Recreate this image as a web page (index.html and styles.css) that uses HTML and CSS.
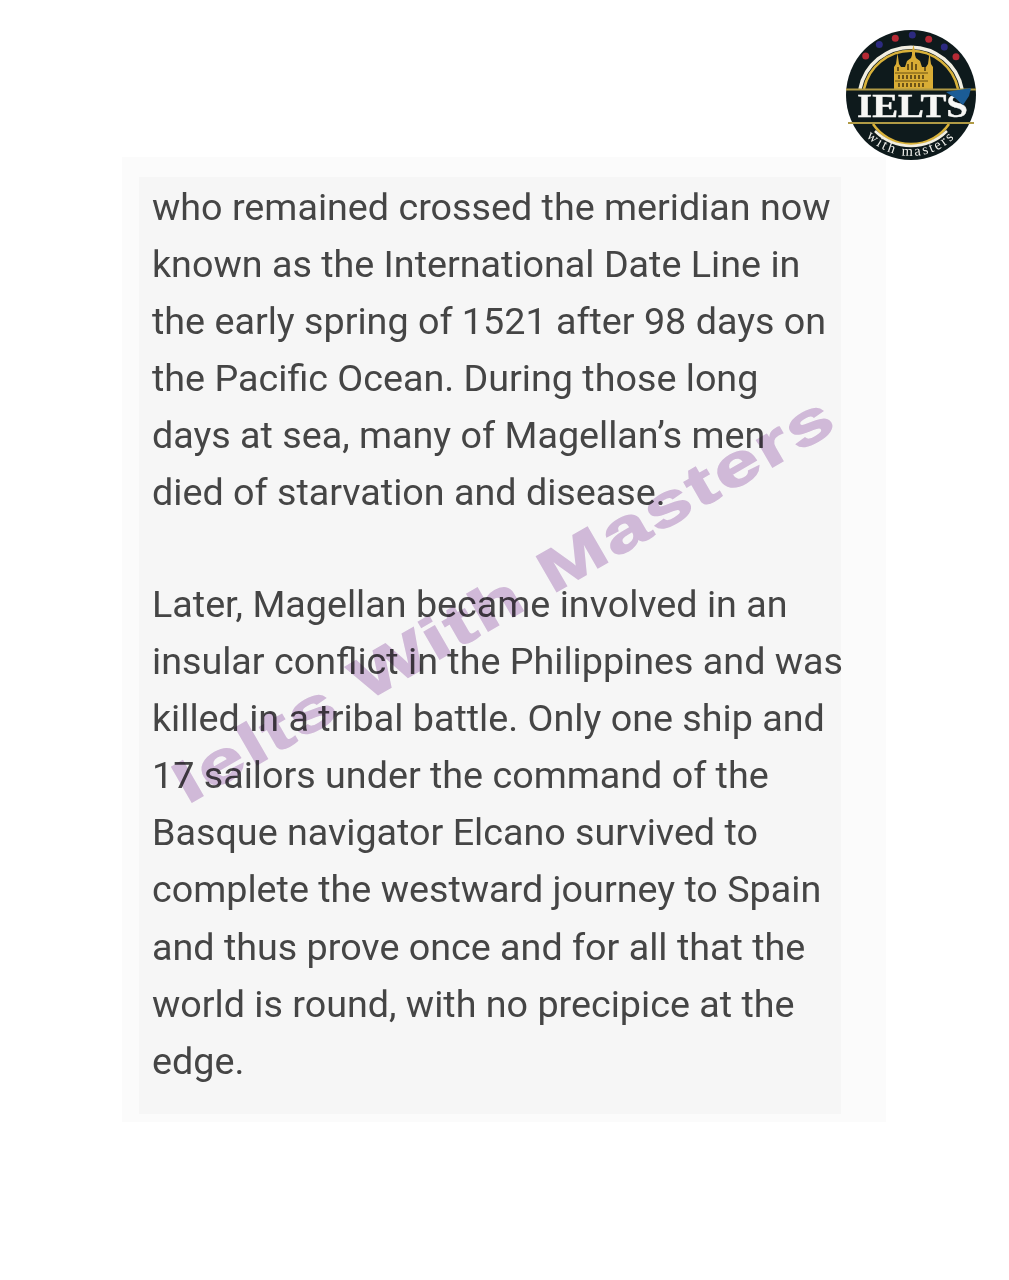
FILE: index.html
```html
<!DOCTYPE html>
<html lang="en">
<head>
<meta charset="utf-8">
<title>IELTS with masters</title>
<link rel="stylesheet" href="styles.css">
</head>
<body>
<div class="page">
  <header class="top">
    <svg class="logo" viewBox="0 0 132 132" width="132" height="132" role="img" aria-label="IELTS with masters">
      <defs>
        <path id="arc" d="M8 84.900 A61 61 0 0 0 124 84.900"/>
      </defs>
      <circle cx="66" cy="66" r="65" fill="#0e1a1c"/>
      <circle cx="20.7" cy="27" r="3.5" fill="#b52a35"/>
      <circle cx="34.3" cy="15.5" r="3.5" fill="#2c2a80"/>
      <circle cx="50.3" cy="9.3" r="3.5" fill="#b52a35"/>
      <circle cx="67.3" cy="6" r="3.5" fill="#2c2a80"/>
      <circle cx="83.7" cy="10.3" r="3.5" fill="#b52a35"/>
      <circle cx="99.3" cy="18" r="3.5" fill="#2c2a80"/>
      <circle cx="111" cy="27.7" r="3.5" fill="#b52a35"/>
      <path d="M15 60 A52 52 0 0 1 117 60" fill="none" stroke="#f2efe2" stroke-width="3.5"/>
      <path d="M19 60 A48 48 0 0 1 113 60" fill="none" stroke="#d9b23a" stroke-width="2.5"/>
      <path d="M28 95 A46 46 0 0 0 104 95" fill="none" stroke="#d9b23a" stroke-width="2.5"/>
      <path d="M30 102 A51 51 0 0 0 102 102" fill="none" stroke="#f2efe2" stroke-width="2.5"/>
      <path d="M49 60V38l2-3 1.500-11 1.500 11 2 3h4l2-6 4-3 1-3V22l1.500-6 1.500 6v4l1 3 4 3 2 6h4l2-3 1.500-11 1.500 11 2 3v22z" fill="#d9ad35"/>
      <path d="M50 44h33M50 52h33" stroke="#6d5212" stroke-width="1" fill="none"/>
      <path d="M54 46v4M58 46v4M62 46v4M66 46v4M70 46v4M74 46v4M78 46v4M54 54v4M58 54v4M62 54v4M66 54v4M70 54v4M74 54v4M78 54v4M53 38v4M80 38v4M63 35v6M67 33v8M71 35v6" stroke="#33260a" stroke-width="1.300" fill="none"/>
      <path d="M1 60.500H131M3 94H129" stroke="#b09a45" stroke-width="2"/>
      <text class="logo-word" x="67.500" y="88" text-anchor="middle" textLength="111" lengthAdjust="spacingAndGlyphs">IELTS</text>
      <path d="M101 63l25-4-2 8-6 9-8-7z" fill="#1b5c96"/>
      <text class="logo-sub"><textPath href="#arc" startOffset="50%" text-anchor="middle">with masters</textPath></text>
    </svg>
  </header>
  <main class="panel">
    <div class="sheet">
      <p class="para">who remained crossed the meridian now<br>known as the International Date Line in<br>the early spring of 1521 after 98 days on<br>the Pacific Ocean. During those long<br>days at sea, many of Magellan’s men<br>died of starvation and disease.</p>
      <p class="para">Later, Magellan became involved in an<br>insular conflict in the Philippines and was<br>killed in a tribal battle. Only one ship and<br>17 sailors under the command of the<br>Basque navigator Elcano survived to<br>complete the westward journey to Spain<br>and thus prove once and for all that the<br>world is round, with no precipice at the<br>edge.</p>
    </div>
  </main>
  <div class="mark">Ielts With Masters</div>
</div>
</body>
</html>
```
FILE: styles.css
```css
* { box-sizing: border-box; }
html, body { margin: 0; background: #fff; }
.page { position: relative; width: 1009px; height: 1280px; overflow: hidden; }
.top { height: 157px; padding: 29px 32px 0 0; display: flex; justify-content: flex-end; align-items: flex-start; }
.logo { display: block; flex: none; position: relative; z-index: 1; }
.logo-word { font-family: "Liberation Serif", serif; font-weight: 700; font-size: 34px; fill: #f7f7f5; stroke: #f7f7f5; stroke-width: 0.4px; }
.logo-sub { font-family: "Liberation Serif", serif; font-size: 14.500px; letter-spacing: 2.200px; fill: #eeeeea; }
.panel { width: 764px; height: 965px; margin-left: 122px; padding: 20px 45px 8px 17px; background: #fbfbfb; }
.sheet { height: 937px; padding: 2px 0 0 13px; background: #f6f6f6; }
.para { margin: 0 0 54.400px; font-family: Roboto, sans-serif; font-size: 37.700px; line-height: 57.100px; color: #454545; white-space: nowrap; filter: blur(0.3px); }
.mark { position: absolute; left: 134px; top: 568px; width: 740px; text-align: center; font-family: "Liberation Sans", sans-serif; font-weight: 700; font-size: 62px; line-height: 62px; letter-spacing: 2px; white-space: nowrap; color: #d8c0e0; -webkit-text-stroke: 1.500px #d8c0e0; mix-blend-mode: multiply; transform: rotate(-30deg) scaleX(1.34) scaleY(0.95); }
```
